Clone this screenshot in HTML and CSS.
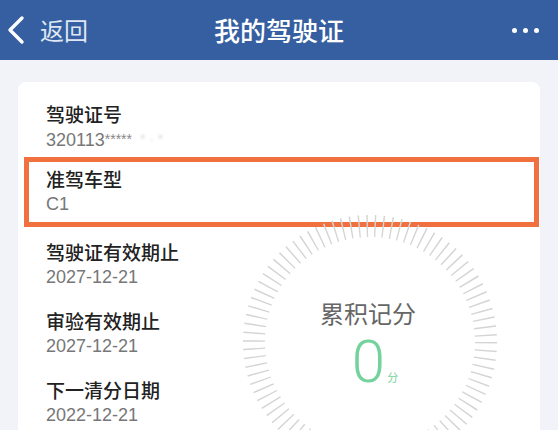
FILE: index.html
```html
<!DOCTYPE html>
<html lang="zh-CN">
<head>
<meta charset="utf-8">
<title>我的驾驶证</title>
<link rel="stylesheet" href="styles.css">
</head>
<body>
<header class="navbar">
  <div class="nav-left">
    <svg class="chevron" width="20" height="30" viewBox="0 0 20 30"><path d="M15 3 L3 15 L15 27" fill="none" stroke="#fff" stroke-width="3.4" stroke-linecap="round" stroke-linejoin="round"/></svg>
    <span class="back-text">返回</span>
  </div>
  <h1 class="nav-title">我的驾驶证</h1>
  <div class="nav-right">
    <span class="dot"></span><span class="dot"></span><span class="dot"></span>
  </div>
</header>

<main class="card">
  <div class="row">
    <div class="label">驾驶证号</div>
    <div class="value">320113<span class="stars">*****</span><span class="masked">* · *</span></div>
  </div>
  <div class="row row-hl">
    <div class="label">准驾车型</div>
    <div class="value">C1</div>
  </div>
  <div class="row">
    <div class="label">驾驶证有效期止</div>
    <div class="value">2027-12-21</div>
  </div>
  <div class="row">
    <div class="label">审验有效期止</div>
    <div class="value">2027-12-21</div>
  </div>
  <div class="row">
    <div class="label">下一清分日期</div>
    <div class="value">2022-12-21</div>
  </div>

  <div class="gauge">
    <svg class="ticks" width="260" height="260" viewBox="0 0 260 260">
      <circle cx="130" cy="130" r="116" fill="none" stroke="#d4d4d4" stroke-width="22" stroke-dasharray="1.4 6.698"/>
    </svg>
    <div class="gauge-text">
      <div class="gauge-title">累积记分</div>
      <div class="gauge-score"><span class="num">0</span><span class="unit">分</span></div>
    </div>
  </div>
</main>
</body>
</html>
```

FILE: styles.css
```css
html, body {
  margin: 0;
  padding: 0;
  overflow: hidden;
}
body {
  background: #f2f3f8;
  font-family: "Noto Sans CJK SC", "Noto Sans", sans-serif;
  width: 558px;
  height: 430px;
}
.navbar {
  height: 60px;
  background: #355fa0;
  display: grid;
  grid-template-columns: 1fr auto 1fr;
  align-items: center;
  color: #fff;
}
.nav-left {
  display: flex;
  align-items: center;
  padding-left: 7px;
}
.chevron {
  display: block;
}
.back-text {
  margin-left: 13px;
  font-size: 24px;
  color: #dfe7f4;
  line-height: 30px;
}
.nav-title {
  margin: 0;
  font-size: 26px;
  font-weight: 500;
  line-height: 32px;
  color: #fff;
}
.nav-right {
  display: flex;
  justify-content: flex-end;
  align-items: center;
  gap: 6px;
  padding-right: 19px;
}
.dot {
  width: 5px;
  height: 5px;
  border-radius: 50%;
  background: #fff;
}
.card {
  position: relative;
  margin: 22px 18px 0;
  background: #fff;
  border-radius: 8px 8px 0 0;
  padding-top: 10px;
  height: 348px;
  box-sizing: border-box;
  overflow: hidden;
}
.row {
  position: relative;
  height: 69px;
  box-sizing: border-box;
  padding: 9px 0 0 28px;
}
.row-hl {
  padding-top: 5px;
}
.row-hl::after {
  content: "";
  position: absolute;
  left: 6px;
  right: 1px;
  top: -4px;
  height: 70px;
  box-sizing: border-box;
  border: 5px solid #f0703f;
}
.label {
  font-size: 19px;
  line-height: 26px;
  font-weight: 500;
  color: #222;
}
.value {
  font-family: "Liberation Sans", "Noto Sans CJK SC", sans-serif;
  font-size: 18px;
  line-height: 24px;
  color: #777;
}
.stars {
  font-size: 14px;
  color: #888;
  vertical-align: 2px;
}
.masked {
  font-size: 14px;
  color: #ddd;
  filter: blur(1px);
  margin-left: 8px;
  vertical-align: 2px;
}
.gauge {
  position: absolute;
  left: 222px;
  top: 130px;
  width: 260px;
  height: 260px;
}
.ticks {
  position: absolute;
  left: 0;
  top: 0;
}
.gauge-text {
  position: relative;
  display: flex;
  flex-direction: column;
  align-items: center;
  padding-top: 86px;
}
.gauge-title {
  font-size: 24px;
  line-height: 30px;
  color: #666;
  margin-right: 4px;
}
.gauge-score {
  margin-top: 4px;
  display: flex;
  align-items: baseline;
  color: #74d29c;
}
.num {
  font-family: Roboto, "Liberation Sans", sans-serif;
  font-weight: 300;
  font-size: 60px;
  line-height: 60px;
  margin-left: 10px;
}
.unit {
  font-size: 11px;
  margin-left: 2px;
}
```
